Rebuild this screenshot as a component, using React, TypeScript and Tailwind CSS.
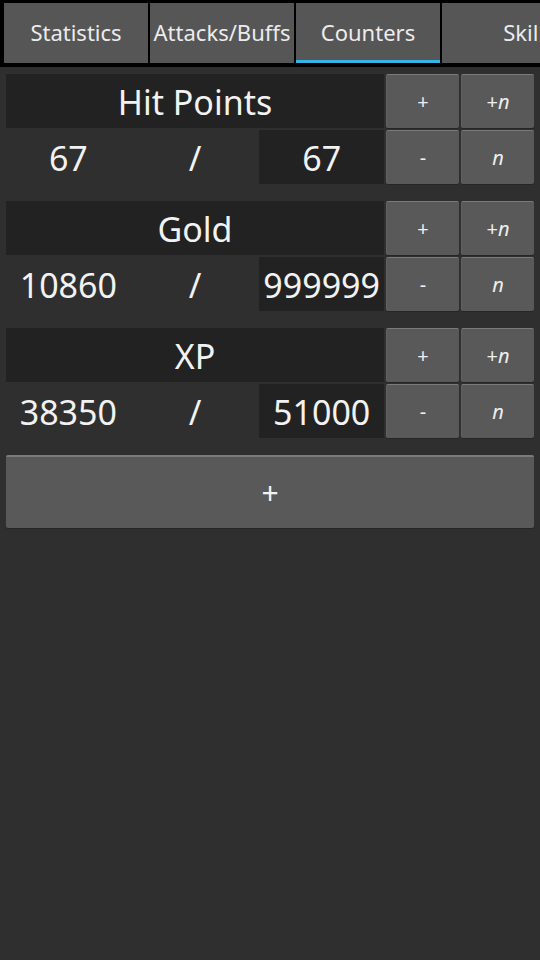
import { useState } from 'react';

type Counter = { name: string; value: number; max: number };

const tabs = ['Statistics', 'Attacks/Buffs', 'Counters', 'Skills'];

function Btn({ children }: { children: React.ReactNode }) {
  return (
    <button className="h-[54px] w-[73px] bg-[#595959] border-t border-t-[#7a7a7a] border-l border-l-[#626262] rounded-[2px] text-[#eeeeee] text-[20px] flex items-center justify-center shadow-[0_1px_0_#262626]">
      {children}
    </button>
  );
}

export default function CountersScreen() {
  const [counters] = useState<Counter[]>([
    { name: 'Hit Points', value: 67, max: 67 },
    { name: 'Gold', value: 10860, max: 999999 },
    { name: 'XP', value: 38350, max: 51000 },
  ]);
  const active = 2;

  return (
    <div className="w-[540px] h-[960px] bg-[#2f2f2f] overflow-hidden" style={{ fontFamily: '"Noto Sans", "Open Sans", sans-serif' }}>
      <div className="h-[67px] bg-black pt-[3px] pl-[4px] flex gap-[2px] overflow-hidden">
        {tabs.map((t, i) => (
          <div key={t} className={(i === tabs.length - 1 ? 'w-[174px]' : 'w-[144px]') + ' shrink-0 h-[60px] flex flex-col bg-[#565656]'}>
            <div className="flex-1 flex items-center justify-center pt-[2px] text-[22px] text-[#ececec] whitespace-nowrap">{t}</div>
            <div className={i === active ? 'h-[3px] bg-[#33b5e5]' : 'h-[3px] bg-[#565656]'} />
          </div>
        ))}
      </div>

      <div className="px-[6px] pt-[7px] flex flex-col gap-[17px]">
        {counters.map(c => (
          <div key={c.name} className="flex flex-col gap-[2px]">
            <div className="flex gap-[2px]">
              <div className="w-[378px] h-[54px] bg-[#222222] flex items-center justify-center pt-[2px] text-[34px] text-[#f2f2f2]">{c.name}</div>
              <Btn>+</Btn>
              <Btn>+<i>n</i></Btn>
            </div>
            <div className="flex gap-[2px]">
              <div className="w-[378px] h-[54px] grid grid-cols-3 gap-[2px] text-[34px] text-[#f2f2f2]">
                <div className="flex items-center justify-center pt-[2px]">{c.value}</div>
                <div className="flex items-center justify-center pt-[2px]">/</div>
                <div className="flex items-center justify-center pt-[2px] bg-[#222222] overflow-hidden">{c.max}</div>
              </div>
              <Btn>-</Btn>
              <Btn><i>n</i></Btn>
            </div>
          </div>
        ))}
        <button className="h-[73px] w-full bg-[#595959] border-t-2 border-t-[#7a7a7a] rounded-[2px] text-[#f2f2f2] text-[30px] flex items-center justify-center shadow-[0_1px_0_#262626]">+</button>
      </div>
    </div>
  );
}
